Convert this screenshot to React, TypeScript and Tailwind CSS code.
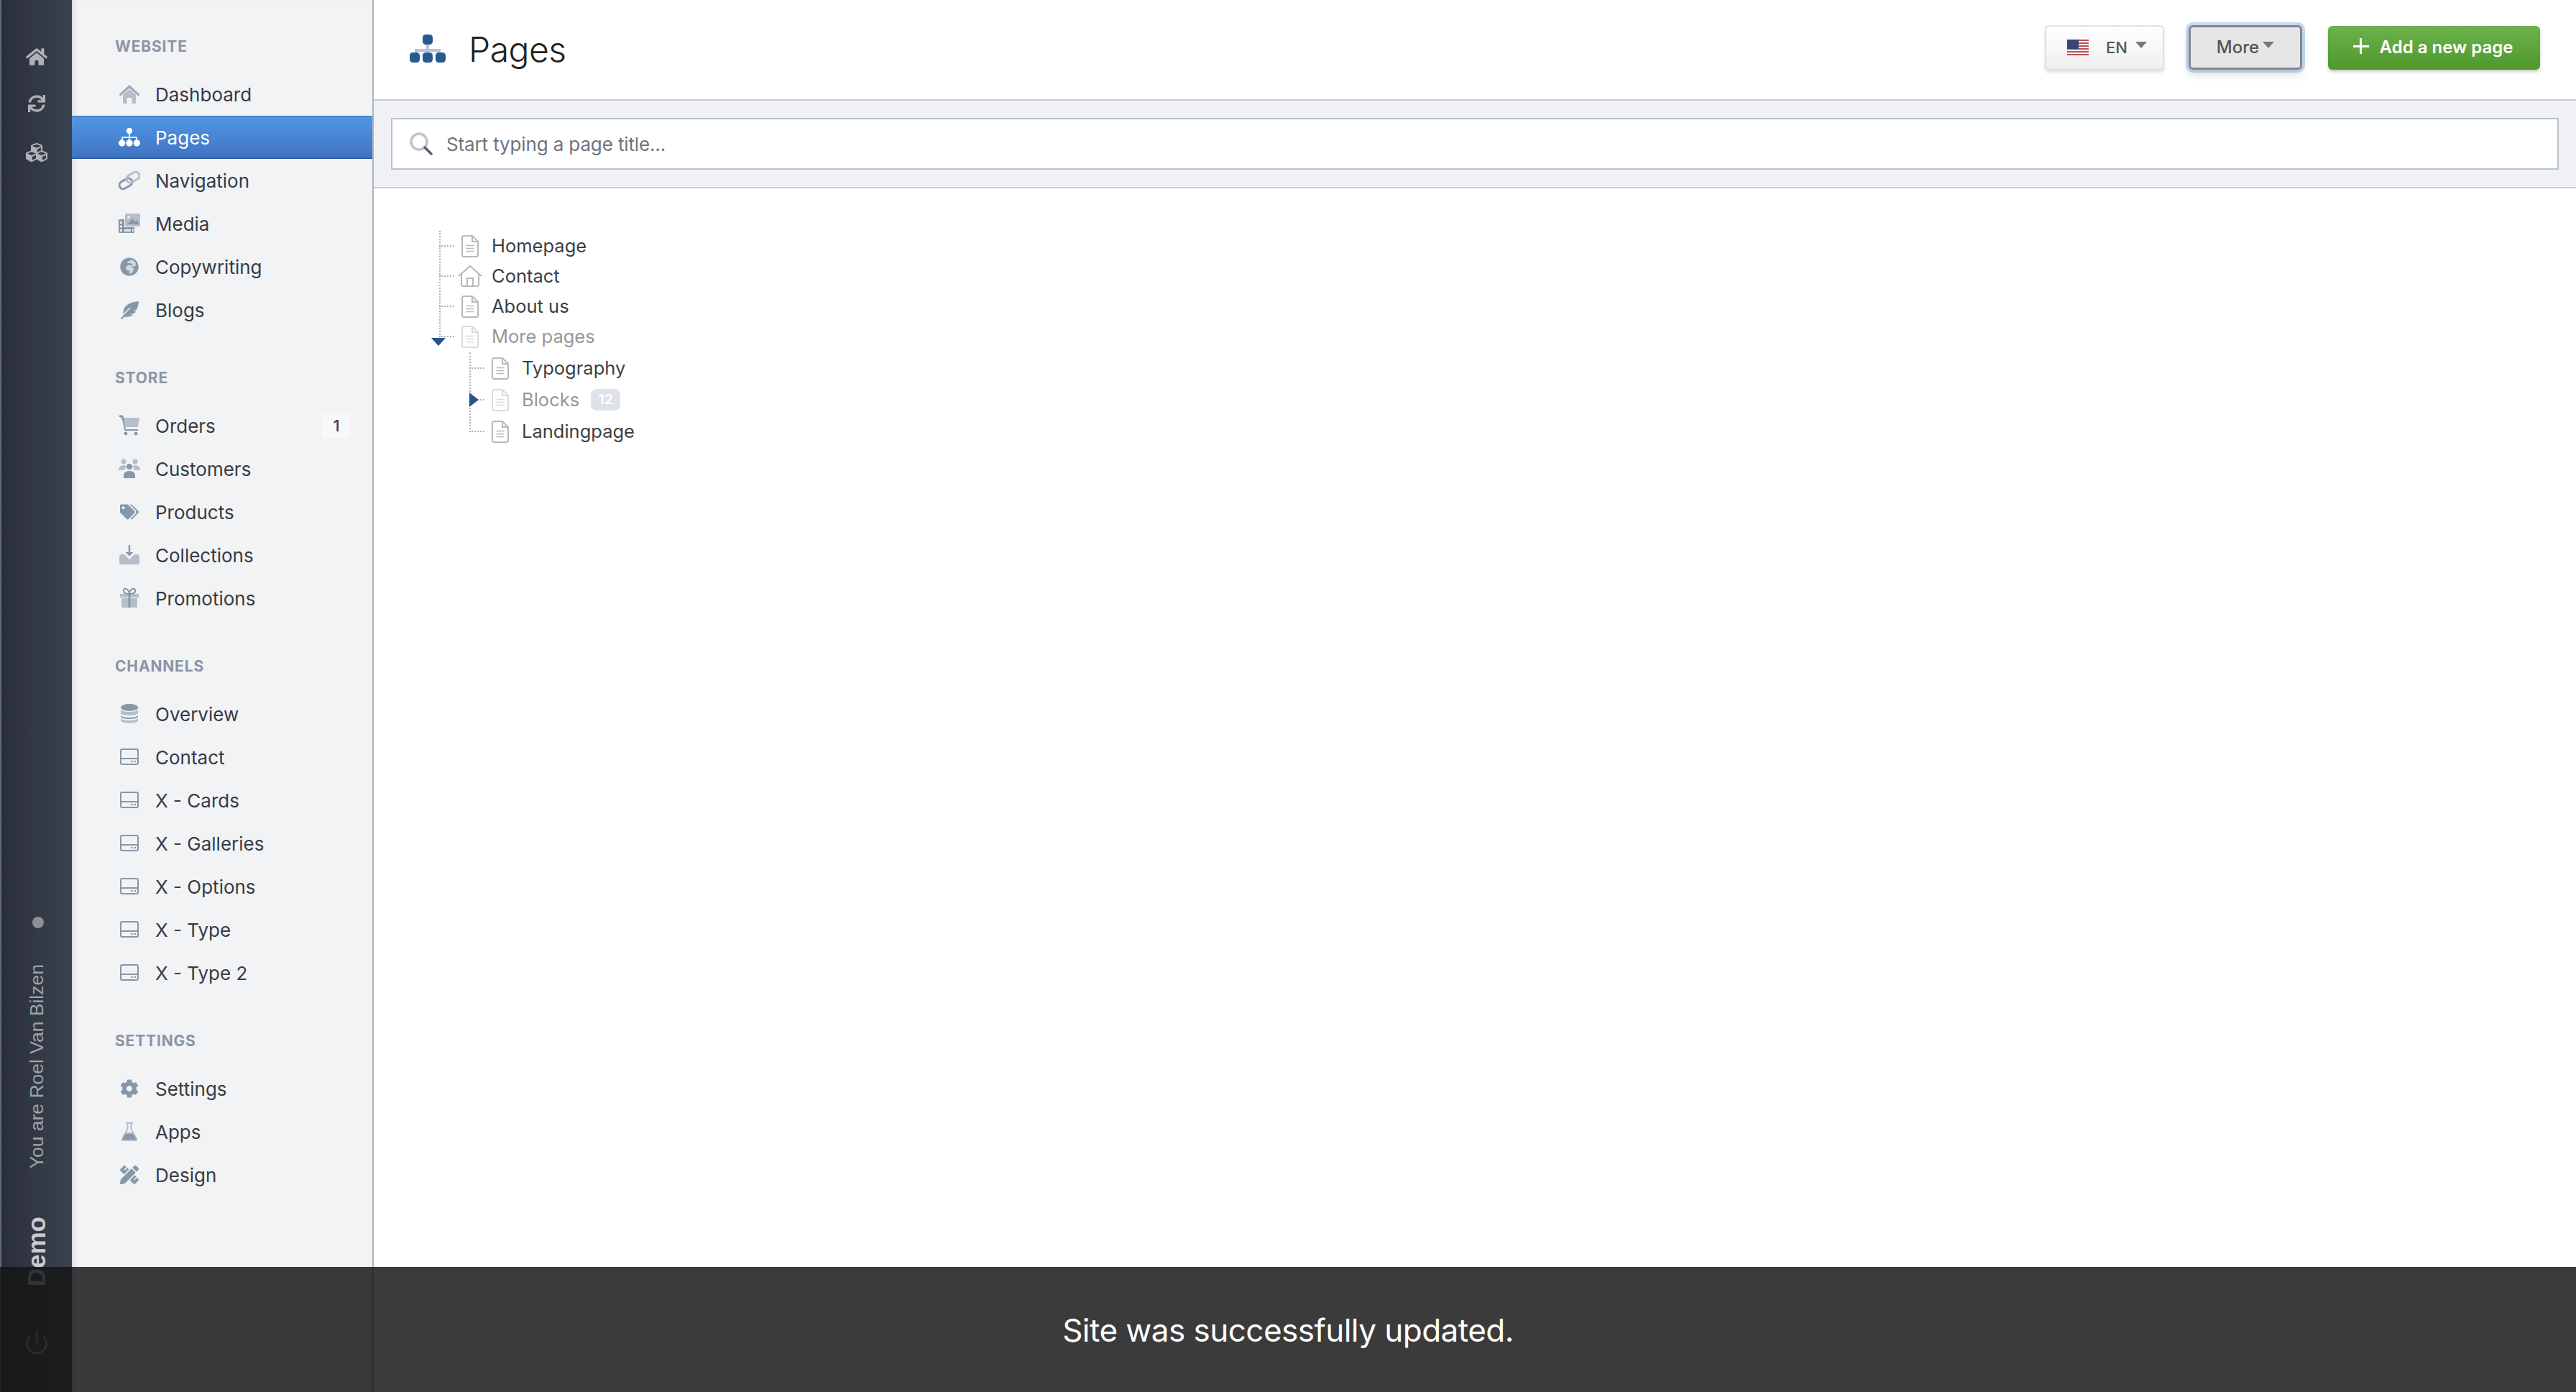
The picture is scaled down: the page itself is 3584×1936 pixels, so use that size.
import type { ReactNode } from 'react';
import { Power } from 'lucide-react';
import {
  FaCog,
  FaCubes,
  FaFeatherAlt,
  FaGlobeAfrica,
  FaHome,
  FaPencilRuler,
  FaSync,
  FaTags,
} from 'react-icons/fa';

// two tones used by all the sidebar glyphs
const L = '#b5bec9';
const D = '#8698a8';

function Glyph({ children }: { children: ReactNode }) {
  return (
    <svg viewBox="0 0 30 30" className="w-[30px] h-[30px]">
      {children}
    </svg>
  );
}

const DashboardIcon = () => (
  <Glyph>
    <path d="M15 2 L29.5 15.5 L27.5 17.5 L15 6.5 L2.5 17.5 L.5 15.5Z" fill="#9aa7b5" />
    <path d="M6 15.5 L15 8 L24 15.5 V27 Q24 28 23 28 H18.5 V20 H11.5 V28 H7 Q6 28 6 27Z" fill={L} />
  </Glyph>
);

const PagesIcon = () => (
  <Glyph>
    <circle cx="15" cy="6" r="4.2" fill="#fff" />
    <path d="M14 9 H16 V14 H26 V19 H24 V16 H16 V19 H14 V16 H6 V19 H4 V14 H14Z" fill="#dbe7f7" />
    <circle cx="4.7" cy="23" r="4.7" fill="#fff" />
    <circle cx="15" cy="23" r="4.7" fill="#fff" />
    <circle cx="25.3" cy="23" r="4.7" fill="#fff" />
  </Glyph>
);

const LinkIcon = () => (
  <Glyph>
    <g fill="none" strokeWidth="3" transform="rotate(-30 15 15)">
      <rect x="-1" y="11" width="19" height="10.5" rx="5.2" stroke={D} />
      <rect x="12" y="8.5" width="19" height="10.5" rx="5.2" stroke={L} />
    </g>
  </Glyph>
);

const MediaIcon = () => (
  <Glyph>
    <rect x="9" y="1" width="21" height="18" rx="2" fill={L} />
    <path d="M12 16 L19 8 L23 12 L25 10 L29 16Z" fill={D} />
    <circle cx="14" cy="6" r="2" fill="#e7ebef" />
    <path d="M1.5 9 H8 V20 H22 V27 Q22 28 21 28 H1.5 Q0 28 0 27 V10 Q0 9 1.5 9Z" fill={D} />
    <path d="M2 12 h3 v3 h-3z M2 17.5 h3 v3 h-3z M2 23 h3 v3 h-3z M8 23 h9 v3 h-9z M19 23 h2 v3 h-2z" fill="#e7ebef" />
  </Glyph>
);

const CartIcon = () => (
  <Glyph>
    <path d="M1 1 H5.5 L8 4 H29 L27 16 Q26.8 17 25.5 17 H10 Z" fill={L} />
    <path d="M1 .5 H5 Q6 .5 6.3 1.5 L10 20 H27 V22 H8.5 L4.5 3 H1Z" fill={D} />
    <circle cx="10" cy="26" r="2.4" fill={D} />
    <circle cx="24" cy="26" r="2.4" fill={D} />
  </Glyph>
);

const CustomersIcon = () => (
  <Glyph>
    <circle cx="7" cy="5" r="3.5" fill={L} />
    <circle cx="23" cy="5" r="3.5" fill={L} />
    <path d="M0 17 Q0 10 7 10 Q10 10 11 12 Q8 14 8 17Z M30 17 Q30 10 23 10 Q20 10 19 12 Q22 14 22 17Z" fill={L} />
    <circle cx="15" cy="12" r="4" fill={D} />
    <path d="M7 28 V25 Q7 18 15 18 Q23 18 23 25 V28Z" fill={D} />
  </Glyph>
);

const CollectionsIcon = () => (
  <Glyph>
    <path d="M13.8 1 H16.2 V11 H20.5 L15 16.5 L9.5 11 H13.8Z" fill={D} />
    <path d="M4 14 H8 L15 21 L22 14 H26 Q29 14 29 18 V25 Q29 28 26 28 H4 Q1 28 1 25 V18 Q1 14 4 14Z" fill={L} />
  </Glyph>
);

const GiftIcon = () => (
  <Glyph>
    <path d="M2 9 H28 V14 H2Z M4 15 H26 V27 Q26 28 25 28 H5 Q4 28 4 27Z" fill={L} />
    <path d="M13.5 9 H16.5 V28 H13.5Z" fill={D} />
    <path d="M15 9 C9 9 6 7 7 3.5 C8 .5 13 1 15 8 C17 1 22 .5 23 3.5 C24 7 21 9 15 9Z" fill="none" stroke={D} strokeWidth="2" />
  </Glyph>
);

const DatabaseIcon = () => (
  <Glyph>
    <ellipse cx="15" cy="6" rx="12" ry="5" fill={D} />
    <path d="M3 9 C5 13 25 13 27 9 V14 C25 18 5 18 3 14Z" fill={L} />
    <path d="M3 17 C5 21 25 21 27 17 V19 C25 23 5 23 3 19Z" fill={D} />
    <path d="M3 21 C5 25 25 25 27 21 V24 C25 29 5 29 3 24Z" fill={L} />
  </Glyph>
);

const ChannelIcon = () => (
  <Glyph>
    <rect x="3" y="4" width="24" height="21" rx="2" fill="none" stroke={D} strokeWidth="2" />
    <path d="M3 17 H27" stroke={D} strokeWidth="2" />
    <path d="M17 20 h2.5 v2 h-2.5z M21.5 20 h2.5 v2 h-2.5z" fill={D} />
  </Glyph>
);

const FlaskIcon = () => (
  <Glyph>
    <path d="M10 2 H20 V4 H18.5 V11 L26 25 Q27 28 24 28 H6 Q3 28 4 25 L11.5 11 V4 H10Z M13.5 4 V11.5 L11 16 H19 L16.5 11.5 V4Z" fill={L} />
    <path d="M9.5 18 H20.5 L25 26 H5Z" fill={D} />
  </Glyph>
);

function ReactIconBox({ children, className }: { children: ReactNode; className: string }) {
  return <span className={`flex w-[30px] h-[30px] items-center justify-center ${className}`}>{children}</span>;
}

const sections = [
  {
    title: 'WEBSITE',
    items: [
      { label: 'Dashboard', icon: <DashboardIcon /> },
      { label: 'Pages', icon: <PagesIcon />, active: true },
      { label: 'Navigation', icon: <LinkIcon /> },
      { label: 'Media', icon: <MediaIcon /> },
      {
        label: 'Copywriting',
        icon: (
          <ReactIconBox className="text-[#8698a8]">
            <span className="rounded-full bg-[#d3d9e0]"><FaGlobeAfrica size={26} className="block" /></span>
          </ReactIconBox>
        ),
      },
      { label: 'Blogs', icon: <ReactIconBox className="text-[#8698a8]"><FaFeatherAlt size={25} /></ReactIconBox> },
    ],
  },
  {
    title: 'STORE',
    items: [
      { label: 'Orders', icon: <CartIcon />, badge: '1' },
      { label: 'Customers', icon: <CustomersIcon /> },
      { label: 'Products', icon: <ReactIconBox className="text-[#8698a8]"><FaTags size={26} /></ReactIconBox> },
      { label: 'Collections', icon: <CollectionsIcon /> },
      { label: 'Promotions', icon: <GiftIcon /> },
    ],
  },
  {
    title: 'CHANNELS',
    items: [
      { label: 'Overview', icon: <DatabaseIcon /> },
      { label: 'Contact', icon: <ChannelIcon /> },
      { label: 'X - Cards', icon: <ChannelIcon /> },
      { label: 'X - Galleries', icon: <ChannelIcon /> },
      { label: 'X - Options', icon: <ChannelIcon /> },
      { label: 'X - Type', icon: <ChannelIcon /> },
      { label: 'X - Type 2', icon: <ChannelIcon /> },
    ],
  },
  {
    title: 'SETTINGS',
    items: [
      { label: 'Settings', icon: <ReactIconBox className="text-[#8698a8]"><FaCog size={26} /></ReactIconBox> },
      { label: 'Apps', icon: <FlaskIcon /> },
      { label: 'Design', icon: <ReactIconBox className="text-[#8698a8]"><FaPencilRuler size={26} /></ReactIconBox> },
    ],
  },
];

function Rail() {
  return (
    <div className="w-[100px] shrink-0 flex flex-col items-center border-l-2 border-[#5f6d80] bg-gradient-to-r from-[#2a2e39] to-[#3a4350] pt-[64px] text-[#aeb1b7] [font-family:'Liberation_Sans',sans-serif]">
      <FaHome size={30} />
      <FaSync size={24} className="mt-[38px]" />
      <FaCubes size={30} className="mt-[41px]" />
      <div className="mt-auto w-[16px] h-[16px] rounded-full bg-[#8b8e95] ml-[3px]" />
      <div className="mt-[50px] [writing-mode:vertical-rl] rotate-180 text-[26.5px] leading-[30px] text-[#9ea3ab]">
        You are Roel Van Bilzen
      </div>
      <div className="mt-[66px] [writing-mode:vertical-rl] rotate-180 text-[35px] leading-[40px] font-bold text-[#c9ccd1]">
        Demo
      </div>
      <Power size={36} strokeWidth={1.5} className="mt-[60px] mb-[51px] text-[#aeb1b7]" />
    </div>
  );
}

function Sidebar() {
  return (
    <div className="w-[420px] shrink-0 bg-[#f2f3f5] border-r-2 border-[#aeb4c1] pt-[51px] shadow-[inset_8px_0_8px_-7px_rgba(0,0,0,0.18)]">
      {sections.map((section, i) => (
        <div key={section.title} className={i > 0 ? 'mt-[51px]' : ''}>
          <div className="h-[28px] pl-[60px] text-[21px] leading-[28px] font-bold tracking-[0.04em] text-[#8a95a5]">
            {section.title}
          </div>
          <div className="mt-[22px]">
            {section.items.map((item) => (
              <div
                key={item.label}
                className={`flex h-[60px] items-center pl-[65px] pr-[30px] text-[26px] ${
                  item.active
                    ? 'bg-gradient-to-b from-[#5296e6] to-[#3f74c2] border-t-2 border-b-2 border-t-[#4a82d2] border-b-[#2f5ea6] text-white'
                    : 'text-[#363b45]'
                }`}
              >
                <span className="w-[30px] flex justify-center">{item.icon}</span>
                <span className="ml-[21px]">{item.label}</span>
                {item.badge && (
                  <span className="ml-auto w-[40px] h-[34px] rounded bg-[#f7f8fa] flex items-center justify-center text-[22px] font-medium">
                    {item.badge}
                  </span>
                )}
              </div>
            ))}
          </div>
        </div>
      ))}
    </div>
  );
}

function Caret() {
  return <span className="inline-block w-0 h-0 border-l-[8px] border-r-[8px] border-t-[9px] border-l-transparent border-r-transparent border-t-[#777]" />;
}

function UsFlag() {
  return (
    <svg viewBox="0 0 30 23" className="w-[30px] h-[23px]">
      <rect width="30" height="23" fill="#f4f4f4" />
      {[0, 4, 8, 12, 16, 20].map((y) => (
        <rect key={y} y={y} width="30" height="2" fill="#b8505a" />
      ))}
      <rect width="16" height="13" fill="#3a4378" />
    </svg>
  );
}

function Header() {
  return (
    <div className="h-[138px] flex items-center pl-[50px] pr-[50px]">
      <svg viewBox="0 0 50 40" className="w-[50px] h-[40px] mb-[2px]">
        <path d="M23 14 H27 V20 H43 V27 H39 V24 H27 V27 H23 V24 H11 V27 H7 V20 H23Z" fill="#b5c4d8" />
        <rect x="18" y="0" width="14" height="14" rx="4.5" fill="#265a90" />
        <rect x="0" y="25" width="14" height="14" rx="4.5" fill="#265a90" />
        <rect x="18" y="25" width="14" height="14" rx="4.5" fill="#265a90" />
        <rect x="36" y="25" width="14" height="14" rx="4.5" fill="#265a90" />
      </svg>
      <h1 className="ml-[32px] text-[48px] font-light tracking-[-0.01em] text-[#222]">Pages</h1>
      <div className="ml-auto mb-[6px] flex items-center text-[24px] font-medium text-[#555]">
        <button className="w-[166px] h-[63px] rounded-md border-2 border-[#dfdfdf] bg-gradient-to-b from-white to-[#efefef] shadow-[0_3px_4px_rgba(0,0,0,0.12)] flex items-center pl-[29px]">
          <UsFlag />
          <span className="ml-[24px] text-[22px]">EN</span>
          <span className="ml-[11px] mb-[8px] flex"><Caret /></span>
        </button>
        <button className="ml-[34px] w-[158px] h-[62px] rounded-md border-[3px] border-[#83888f] bg-[#e6e6e6] shadow-[0_0_0_4px_rgba(110,160,215,0.4),0_8px_12px_rgba(0,0,0,0.12)] flex items-center justify-center">
          <span>More</span>
          <span className="ml-[5px] mb-[8px] flex"><Caret /></span>
        </button>
        <button className="ml-[36px] w-[295px] h-[61px] rounded-md bg-gradient-to-b from-[#6db24c] to-[#4e982b] shadow-[0_3px_4px_rgba(0,0,0,0.2)] flex items-center justify-center pr-[3px] font-semibold text-white">
          <span className="relative w-[22px] h-[22px] mb-[4px] flex items-center justify-center">
            <span className="w-[22px] h-[3px] bg-white" />
            <span className="absolute w-[3px] h-[22px] bg-white" />
          </span>
          <span className="ml-[15px]">Add a new page</span>
        </button>
      </div>
    </div>
  );
}

function SearchBar() {
  return (
    <div className="h-[124px] shrink-0 flex items-center px-[24px] bg-[#eff1f4] border-t-2 border-b-2 border-[#c5ccd5]">
      <div className="w-full h-[72px] flex items-center pl-[24px] bg-white border-2 border-[#b8c2ce]">
        <svg viewBox="0 0 32 32" className="w-[32px] h-[32px]">
          <circle cx="13" cy="13" r="11" fill="none" stroke="#bcc4cc" strokeWidth="3.5" />
          <path d="M21 21 L30 30" stroke="#59626b" strokeWidth="3.5" strokeLinecap="round" />
        </svg>
        <span className="ml-[19px] text-[26px] tracking-[-0.005em] text-[#6f7479]">Start typing a page title...</span>
      </div>
    </div>
  );
}

function FileIcon() {
  return (
    <svg viewBox="0 0 24 31" className="w-[24px] h-[31px]" fill="none" stroke="#b9b9b9" strokeWidth="2">
      <path d="M3.5 1 H15 L23 9 V27.5 Q23 30 20.5 30 H3.5 Q1 30 1 27.5 V3.5 Q1 1 3.5 1Z" />
      <path d="M15 1 V9 H23" />
      <path d="M6.5 14.5 H17.5 M6.5 18.5 H17.5 M6.5 22.5 H17.5" strokeWidth="1.5" />
    </svg>
  );
}

function HouseIcon() {
  return (
    <svg viewBox="0 0 34 30" className="w-[34px] h-[30px]" fill="none" stroke="#b9b9b9" strokeWidth="2">
      <path d="M1 15 L17 1 L33 15" />
      <path d="M5 12 V27 Q5 29 7 29 H27 Q29 29 29 27 V12" />
      <path d="M13 29 V18 H21 V29" />
    </svg>
  );
}

function TreeRow({
  label,
  height,
  muted,
  home,
  badge,
  arrow,
}: {
  label: string;
  height: string;
  muted?: boolean;
  home?: boolean;
  badge?: string;
  arrow?: ReactNode;
}) {
  return (
    <div className={`relative flex items-center ${height}`}>
      <span className="w-[21px] border-t-2 border-dotted border-[#b3b3b3]" />
      <span className={`w-[44px] flex justify-center ${muted ? 'opacity-50' : ''}`}>
        {home ? <HouseIcon /> : <FileIcon />}
      </span>
      <span className={`ml-[8px] text-[25.5px] ${muted ? 'text-[#979797]' : 'text-[#3c3f44]'}`}>{label}</span>
      {badge && (
        <span className="ml-[16px] w-[41px] h-[30px] rounded-lg bg-[#dde3e9] flex items-center justify-center text-[19px] font-bold text-white">
          {badge}
        </span>
      )}
      {arrow}
    </div>
  );
}

function Tree() {
  return (
    <div className="pt-[59px] pl-[91px]">
      <div className="relative">
        <div className="absolute left-0 top-0 h-[145px] border-l-2 border-dotted border-[#b3b3b3]" />
        <TreeRow label="Homepage" height="h-[42px]" />
        <TreeRow label="Contact" height="h-[42px]" home />
        <TreeRow label="About us" height="h-[42px]" />
        <TreeRow
          label="More pages"
          height="h-[42px]"
          muted
          arrow={
            <span className="absolute left-[-11px] top-[23px] w-0 h-0 border-l-[10px] border-r-[10px] border-t-[11px] border-l-transparent border-r-transparent border-t-[#2a5389]" />
          }
        />
        <div className="relative ml-[42px] mt-px">
          <div className="absolute left-0 top-0 h-[111px] border-l-2 border-dotted border-[#b3b3b3]" />
          <TreeRow label="Typography" height="h-[44px]" />
          <TreeRow
            label="Blocks"
            height="h-[44px]"
            muted
            badge="12"
            arrow={
              <span className="absolute left-0 top-[12px] w-0 h-0 border-t-[10px] border-b-[10px] border-l-[13px] border-t-transparent border-b-transparent border-l-[#2a5389]" />
            }
          />
          <TreeRow label="Landingpage" height="h-[44px]" />
        </div>
      </div>
    </div>
  );
}

export default function App() {
  return (
    <div className="relative flex h-[1936px] w-[3584px] overflow-hidden bg-white [font-family:Inter,sans-serif]">
      <Rail />
      <Sidebar />
      <div className="flex-1 flex flex-col">
        <Header />
        <SearchBar />
        <Tree />
      </div>
      <div className="absolute inset-x-0 bottom-0 h-[174px] pt-[2px] bg-[rgba(22,22,22,0.84)] flex items-center justify-center text-[44px] tracking-[-0.012em] text-white">
        Site was successfully updated.
      </div>
    </div>
  );
}
